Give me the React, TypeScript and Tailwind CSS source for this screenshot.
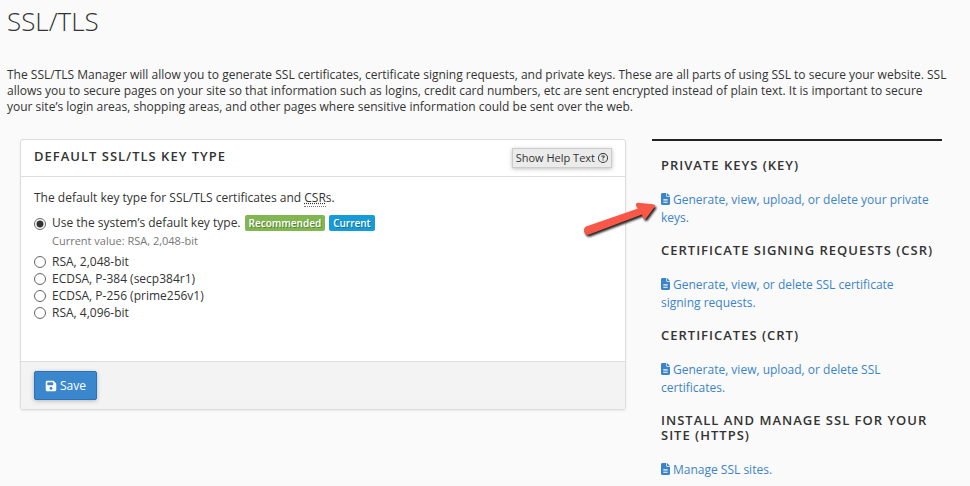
import { useState } from "react";
import { FaFileLines, FaFloppyDisk, FaRegCircleQuestion } from "react-icons/fa6";

const keyTypes = [
  { value: "rsa-2048", label: "RSA, 2,048-bit" },
  { value: "ecdsa-secp384r1", label: "ECDSA, P-384 (secp384r1)" },
  { value: "ecdsa-prime256v1", label: "ECDSA, P-256 (prime256v1)" },
  { value: "rsa-4096", label: "RSA, 4,096-bit" },
];

const sections = [
  { title: "Private Keys (KEY)", link: "Generate, view, upload, or delete your private keys.", href: "#keys", pointer: true },
  { title: "Certificate Signing Requests (CSR)", link: "Generate, view, or delete SSL certificate signing requests.", href: "#csrs" },
  { title: "Certificates (CRT)", link: "Generate, view, upload, or delete SSL certificates.", href: "#crts" },
  { title: "Install and Manage SSL for your site (HTTPS)", link: "Manage SSL sites.", href: "#install" },
];

const radioClass =
  "m-0 mt-[3px] size-3 shrink-0 appearance-none rounded-full border border-[#666] bg-white checked:bg-[radial-gradient(circle,#333_3px,transparent_4px)]";

const badgeClass =
  "rounded-[2px] px-1 text-[10px] font-semibold leading-4 text-white [text-shadow:1px_1px_0_rgba(0,0,0,0.3)]";

const arrowPath =
  "M5 35.500 L57 17.500 L55 14.500 Q54.500 12 57 11.800 L72 13.200 Q75 14 73.500 16 L65 27.500 Q62.500 29 62 26.500 L61 23.500 L8 43.500 Q4 44.500 3 40.500 Q2.500 37 5 35.500Z";

function PointerArrow() {
  return (
    <svg
      className="pointer-events-none absolute -left-20 top-0 h-12 w-20"
      viewBox="0 0 80 48"
      aria-hidden="true"
    >
      <path d={arrowPath} fill="#222" transform="translate(1.500 2)" className="blur-[1px]" />
      <path d={arrowPath} fill="#f95849" />
    </svg>
  );
}

export default function App() {
  const [keyType, setKeyType] = useState("system");

  return (
    <div className="min-h-screen bg-[#fafafa] font-['Open_Sans',sans-serif] text-xs leading-4 text-[#333]">
      <header className="pl-[7px] pr-[21px] pt-[3px]">
        <h1 className="text-[26px] font-light leading-9">SSL/TLS</h1>
        <p className="mt-7">
          The SSL/TLS Manager will allow you to generate SSL certificates, certificate signing requests, and private
          keys. These are all parts of using SSL to secure your website. SSL allows you to secure pages on your site so
          that information such as logins, credit card numbers, etc are sent encrypted instead of plain text. It is
          important to secure your site’s login areas, shopping areas, and other pages where sensitive information could
          be sent over the web.
        </p>
      </header>

      <main className="mt-6 grid grid-cols-[606fr_290fr] items-start gap-[26px] pl-5 pr-7">
        <form
          className="rounded-[3px] border border-[#ddd] bg-white shadow-[0_1px_2px_rgba(0,0,0,0.08)]"
          onSubmit={(e) => e.preventDefault()}
        >
          <div className="flex items-start justify-between border-b border-[#ddd] px-[13px] py-2">
            <h2 className="text-[13px] font-semibold uppercase leading-4 tracking-[1px]">
              Default SSL/TLS Key Type
            </h2>
            <button
              type="button"
              className="flex h-5 items-center gap-[3px] border border-[#ccc] bg-[#ebebeb] px-[3px] text-[11px] shadow-[0_1px_4px_rgba(0,0,0,0.25)]"
            >
              Show Help Text
              <FaRegCircleQuestion className="size-[10px]" />
            </button>
          </div>

          <div className="px-[13px] pb-10 pt-[13px]">
            <p>
              The default key type for SSL/TLS certificates and{" "}
              <abbr title="Certificate Signing Request" className="border-b border-dotted border-[#777]">
                CSR
              </abbr>
              s.
            </p>
            <div className="mt-[9px] flex items-start gap-[6px]">
              <input
                id="system"
                type="radio"
                name="keyType"
                className={radioClass}
                checked={keyType === "system"}
                onChange={() => setKeyType("system")}
              />
              <div>
                <div className="flex items-center gap-1">
                  <label htmlFor="system">Use the system’s default key type.</label>
                  <span className={`${badgeClass} bg-[#81b651]`}>Recommended</span>
                  <span className={`${badgeClass} bg-[#179bd7]`}>Current</span>
                </div>
                <p className="mt-[2px] text-[11px] text-[#777]">Current value: RSA, 2,048-bit</p>
              </div>
            </div>
            <div className="mt-1">
              {keyTypes.map((type) => (
                <div key={type.value} className="flex items-start gap-[6px] leading-[17px]">
                  <input
                    id={type.value}
                    type="radio"
                    name="keyType"
                    className={radioClass}
                    checked={keyType === type.value}
                    onChange={() => setKeyType(type.value)}
                  />
                  <label htmlFor={type.value}>{type.label}</label>
                </div>
              ))}
            </div>
          </div>

          <div className="border-t border-[#ddd] bg-[#f3f3f3] px-[13px] py-[9px]">
            <button
              type="submit"
              className="flex h-[29px] items-center gap-[3px] rounded-[2px] border border-[#2872b5] bg-[#3a87cd] px-[10px] text-white shadow-[0_1px_4px_rgba(0,0,0,0.25)]"
            >
              <FaFloppyDisk className="size-3" />
              Save
            </button>
          </div>
        </form>

        <aside className="border-t-2 border-[#222] pl-[9px] pt-[17px]">
          {sections.map((section) => (
            <section key={section.title} className="mb-4 last:mb-0">
              <h2 className="text-[13px] font-semibold uppercase leading-[15px] tracking-[1px]">{section.title}</h2>
              <p className="relative mt-[18px] pr-[9px] leading-[18px]">
                {section.pointer && <PointerArrow />}
                <a href={section.href} className="text-[#3a84c9]">
                  <FaFileLines className="mr-[3px] inline h-3 w-[9px] align-[-1px]" />
                  {section.link}
                </a>
              </p>
            </section>
          ))}
        </aside>
      </main>
    </div>
  );
}
